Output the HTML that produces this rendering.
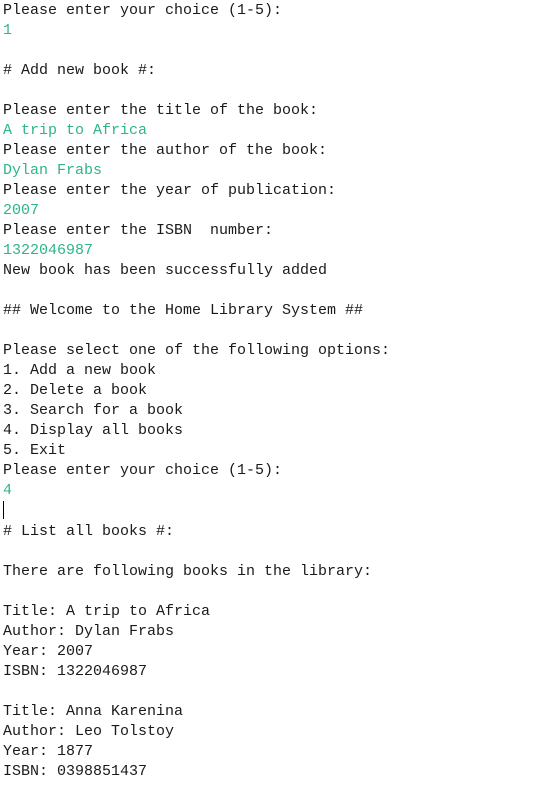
<!DOCTYPE html>
<html><head><style>
body{margin:0;background:#fff;}
pre{margin:0;padding:1px 0 0 3px;font-family:"Liberation Mono",monospace;font-size:15px;line-height:20px;color:#1a1a1a;}
.g{color:#2db58a;}
.c{display:inline-block;width:1px;height:18px;background:#000;vertical-align:-4px;}
</style></head><body><pre>Please enter your choice (1-5):
<span class="g">1</span>

# Add new book #:

Please enter the title of the book:
<span class="g">A trip to Africa</span>
Please enter the author of the book:
<span class="g">Dylan Frabs</span>
Please enter the year of publication:
<span class="g">2007</span>
Please enter the ISBN  number:
<span class="g">1322046987</span>
New book has been successfully added

## Welcome to the Home Library System ##

Please select one of the following options:
1. Add a new book
2. Delete a book
3. Search for a book
4. Display all books
5. Exit
Please enter your choice (1-5):
<span class="g">4</span>
<span class="c"></span>
# List all books #:

There are following books in the library:

Title: A trip to Africa
Author: Dylan Frabs
Year: 2007
ISBN: 1322046987

Title: Anna Karenina
Author: Leo Tolstoy
Year: 1877
ISBN: 0398851437</pre></body></html>
